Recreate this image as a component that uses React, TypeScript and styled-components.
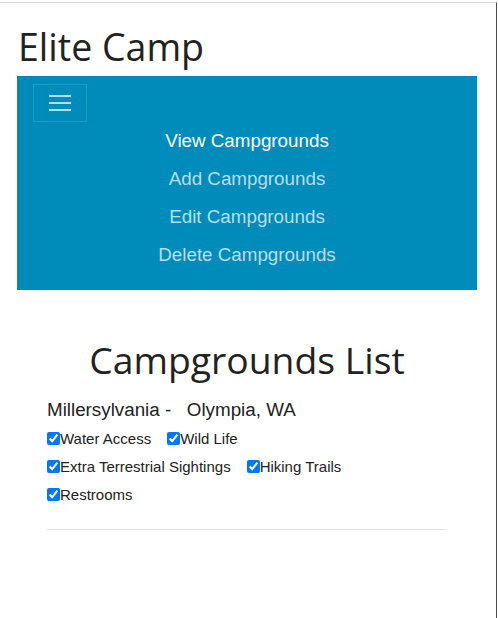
import React from "react";
import styled, { createGlobalStyle } from "styled-components";

const GlobalStyle = createGlobalStyle`
  html, body {
    margin: 0;
    padding: 0;
    background: #fff;
  }
  body {
    font-family: "Liberation Sans", Arial, sans-serif;
    color: #222;
  }
`;

const links = [
  { label: "View Campgrounds", active: true },
  { label: "Add Campgrounds", active: false },
  { label: "Edit Campgrounds", active: false },
  { label: "Delete Campgrounds", active: false },
];

const features = [
  ["Water Access", "Wild Life"],
  ["Extra Terrestrial Sightings", "Hiking Trails"],
  ["Restrooms"],
];

const App = () => {
  return (
    <>
      <GlobalStyle />
      <Frame>
        <Page>
          <Title>Elite Camp</Title>
          <Navbar>
            <Toggler aria-label="menu">
              <Bar />
              <Bar />
              <Bar />
            </Toggler>
            <NavList>
              {links.map((l) => (
                <NavLink key={l.label} active={l.active}>
                  {l.label}
                </NavLink>
              ))}
            </NavList>
          </Navbar>
          <Content>
            <ListTitle>Campgrounds List</ListTitle>
            <Camp>
              Millersylvania -&nbsp;&nbsp;&nbsp;Olympia, WA
            </Camp>
            {features.map((row, i) => (
              <FeatureRow key={i}>
                {row.map((f) => (
                  <Feature key={f}>
                    <Check type="checkbox" defaultChecked readOnly />
                    {f}
                  </Feature>
                ))}
              </FeatureRow>
            ))}
            <Rule />
          </Content>
        </Page>
      </Frame>
    </>
  );
};

export default App;

const Frame = styled.div`
  width: 497px;
  height: 616px;
  border-top: 1px solid #d9d9d9;
  border-right: 1px solid #4d4d4d;
  margin-top: 2px;
  box-sizing: border-box;
`;

const Page = styled.div`
  padding: 0 15px 0 17px;
  display: flex;
  flex-direction: column;
`;

const Title = styled.h1`
  font-family: "Open Sans", sans-serif;
  font-weight: 400;
  font-size: 37.5px;
  line-height: 48px;
  color: #222;
  margin: 20px 0 5px 1px;
`;

const Navbar = styled.nav`
  background-color: #008cba;
  width: 460px;
  padding: 8px 16px 16px;
  box-sizing: border-box;
  display: flex;
  flex-direction: column;
`;

const Toggler = styled.button`
  width: 54px;
  height: 38px;
  background: transparent;
  border: 1px solid rgba(255, 255, 255, 0.12);
  border-radius: 0;
  display: flex;
  flex-direction: column;
  align-items: center;
  justify-content: center;
  gap: 5px;
  padding: 0;
`;

const Bar = styled.span`
  display: block;
  width: 22px;
  height: 2px;
  background: rgba(255, 255, 255, 0.7);
`;

const NavList = styled.ul`
  list-style: none;
  margin: 0;
  padding: 0;
  display: flex;
  flex-direction: column;
  align-items: center;
`;

const NavLink = styled.li<{ active: boolean }>`
  font-size: 18.8px;
  line-height: 38px;
  color: ${(p) => (p.active ? "#ffffff" : "rgba(255, 255, 255, 0.72)")};
`;

const Content = styled.div`
  width: 400px;
  margin: 0 0 0 30px;
  padding-top: 46px;
  display: flex;
  flex-direction: column;
`;

const ListTitle = styled.h2`
  font-family: "Open Sans", sans-serif;
  font-weight: 400;
  font-size: 37.3px;
  line-height: 48px;
  color: #222;
  text-align: center;
  margin: 0 0 13px;
`;

const Camp = styled.div`
  font-size: 18.8px;
  line-height: 26px;
  color: #222;
  margin-bottom: 1px;
`;

const FeatureRow = styled.div`
  display: flex;
  gap: 16px;
  height: 28px;
  align-items: center;
`;

const Feature = styled.label`
  display: flex;
  align-items: center;
  font-size: 15px;
  color: #222;
`;

const Check = styled.input`
  width: 13px;
  height: 13px;
  margin: 0;
  accent-color: #0075ff;
`;

const Rule = styled.hr`
  width: 100%;
  border: 0;
  border-top: 1px solid #e5e5e5;
  margin: 21px 0 0;
`;
